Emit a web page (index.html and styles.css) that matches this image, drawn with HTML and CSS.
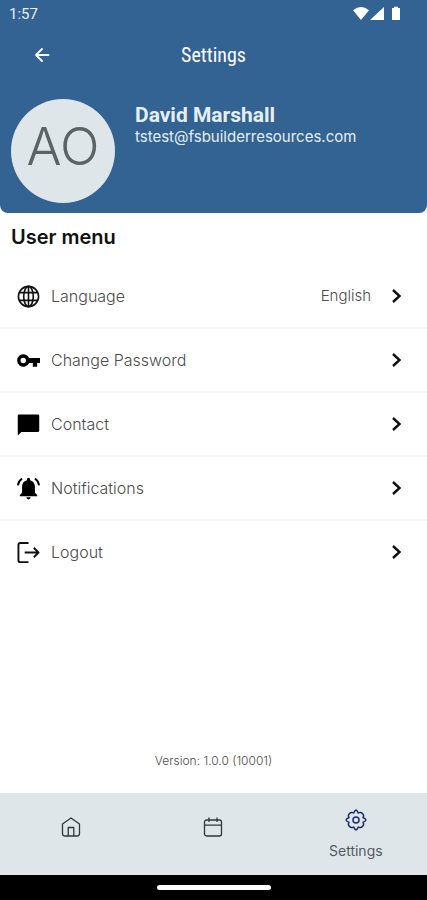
FILE: index.html
```html
<!DOCTYPE html>
<html lang="en">
<head>
<meta charset="utf-8">
<meta name="viewport" content="width=device-width, initial-scale=1">
<title>Settings</title>
<link rel="stylesheet" href="styles.css">
</head>
<body>
<div class="screen">
  <header class="header">
    <div class="status">
      <span>1:57</span>
      <svg class="status-icons" width="48" height="16" viewBox="0 0 48 16" fill="#fff" aria-hidden="true">
        <path d="M0 4.200Q8 -2.200 16 4.200L8 14z"/>
        <path d="M31 1v13H17z"/>
        <path d="M39 2h2V.8h4V2h2v12h-8z"/>
      </svg>
    </div>
    <div class="appbar">
      <button class="back" type="button" aria-label="Back">
        <svg width="16" height="16" viewBox="0 0 16 16" fill="none" stroke="#fff" stroke-width="1.8" stroke-linecap="round" stroke-linejoin="round"><path d="M14.500 8H2M8 2 2 8l6 6"/></svg>
      </button>
      <h1>Settings</h1>
    </div>
    <div class="profile">
      <div class="avatar">AO</div>
      <div class="identity">
        <h2>David Marshall</h2>
        <p>tstest@fsbuilderresources.com</p>
      </div>
    </div>
  </header>

  <main class="content">
    <h2 class="section-title">User menu</h2>
    <nav class="menu" aria-label="User menu">
      <a class="row" href="#language">
        <svg class="icon" viewBox="0 0 24 24" fill="none" stroke="#111" stroke-width="1.700"><circle cx="12" cy="12" r="10.500"/><ellipse cx="12" cy="12" rx="5" ry="10.500"/><path d="M12 1.500v21M3 8h18M3 16h18"/></svg>
        <span class="label">Language</span>
        <span class="value">English</span>
        <svg class="chevron" viewBox="0 0 12 16"><path d="m2 2 6.500 6L2 14"/></svg>
      </a>
      <a class="row" href="#password">
        <svg class="icon" viewBox="0 0 24 24"><path d="M12.650 9.500A6.500 6.500 0 1 0 12.650 14.500H16.500V18.500H21V14.500H24V9.500zM6.500 14.800a2.800 2.800 0 1 1 0-5.600 2.800 2.800 0 0 1 0 5.600z" fill-rule="evenodd"/></svg>
        <span class="label">Change Password</span>
        <svg class="chevron" viewBox="0 0 12 16"><path d="m2 2 6.500 6L2 14"/></svg>
      </a>
      <a class="row" href="#contact">
        <svg class="icon" viewBox="0 0 24 24"><path d="M2 1.500h20a1.200 1.200 0 0 1 1.200 1.200v15.800a1.200 1.200 0 0 1-1.200 1.200H4.600L.8 23.500V2.700A1.200 1.200 0 0 1 2 1.500z"/></svg>
        <span class="label">Contact</span>
        <svg class="chevron" viewBox="0 0 12 16"><path d="m2 2 6.500 6L2 14"/></svg>
      </a>
      <a class="row" href="#notifications">
        <svg class="icon" viewBox="0 0 24 24"><path d="M12 .8a1.700 1.700 0 0 1 1.700 1.700v.8C17 4.100 18.700 6.800 18.700 10v6.500l2.300 2.300V20H3v-1.200l2.300-2.300V10c0-3.200 1.700-5.900 5-6.700v-.8A1.700 1.700 0 0 1 12 .8zM9.800 21.200h4.400a2.200 2.200 0 0 1-4.400 0z"/><path d="M5.300 1.500Q1.500 4.200 1 8.800M18.700 1.500q3.800 2.700 4.300 7.300" fill="none" stroke="#000" stroke-width="2"/></svg>
        <span class="label">Notifications</span>
        <svg class="chevron" viewBox="0 0 12 16"><path d="m2 2 6.500 6L2 14"/></svg>
      </a>
      <a class="row" href="#logout">
        <svg class="icon" viewBox="0 0 24 24" fill="none" stroke="#111" stroke-width="2" stroke-linejoin="round"><path d="M12 2H3.500A2 2 0 0 0 1.500 4v16a2 2 0 0 0 2 2H12M8 12h14.500M17.500 7l5 5-5 5"/></svg>
        <span class="label">Logout</span>
        <svg class="chevron" viewBox="0 0 12 16"><path d="m2 2 6.500 6L2 14"/></svg>
      </a>
    </nav>
    <p class="version">Version: 1.0.0 (10001)</p>
  </main>

  <nav class="tabs" aria-label="Main">
    <a href="#home" aria-label="Home">
      <svg class="tab-icon" viewBox="0 0 20 20"><path d="M10 1 1.500 7v9.500A2.500 2.500 0 0 0 4 19h12a2.500 2.500 0 0 0 2.500-2.500V7zM7.200 19v-8.500h5.600V19"/></svg>
    </a>
    <a href="#calendar" aria-label="Calendar">
      <svg class="tab-icon" viewBox="0 0 20 20"><path d="M3.500 3h13a2 2 0 0 1 2 2v12a2 2 0 0 1-2 2h-13a2 2 0 0 1-2-2V5a2 2 0 0 1 2-2zM1.500 8.200h17M6 .5v4.500M14 .5v4.500"/></svg>
    </a>
    <a class="active" href="#settings" aria-current="page">
      <svg class="tab-icon gear" viewBox="0 0 22 22"><path d="M11 1 Q12.200 1.200 13.200 3.900Q15.900 2.700 17.500 4.500 19.300 6.100 18.100 8.800 20.800 9.800 21 11 20.800 12.200 18.100 13.200 19.300 15.900 17.500 17.500 15.900 19.300 13.200 18.100 12.200 20.800 11 21 9.800 20.800 8.800 18.100 6.100 19.300 4.500 17.500 2.700 15.900 3.900 13.200 1.200 12.200 1 11 1.200 9.800 3.900 8.800 2.700 6.100 4.500 4.500 6.100 2.700 8.800 3.900 9.800 1.200 11 1z"/><circle cx="11" cy="11" r="3"/></svg>
      <span>Settings</span>
    </a>
  </nav>
  <div class="system-bar"><span class="handle"></span></div>
</div>
</body>
</html>
```
FILE: styles.css
```css
* {
  box-sizing: border-box;
}

body,
h1,
h2,
p {
  margin: 0;
}

body {
  background: #fff;
  color: #4c4c4c;
  font-family: Inter, "Open Sans", sans-serif;
  font-size: 16px;
  line-height: 20px;
}

a {
  color: inherit;
  text-decoration: none;
}

.screen {
  display: flex;
  flex-direction: column;
  min-height: 100vh;
}

.header {
  padding-bottom: 10px;
  border-radius: 0 0 8px 8px;
  background: #326392;
  color: #e6eff6;
}

.status {
  display: flex;
  align-items: center;
  justify-content: space-between;
  height: 27px;
  padding: 0 26px 0 9px;
  font-family: Roboto, sans-serif;
  font-size: 15px;
}

.appbar {
  display: grid;
  grid-template-columns: 1fr auto 1fr;
  align-items: center;
  height: 56px;
}

.appbar h1 {
  color: #fff;
  font-family: "Roboto Condensed", Roboto, sans-serif;
  font-size: 20px;
  font-weight: 400;
}

.back {
  display: flex;
  justify-self: start;
  margin-left: 26px;
  padding: 8px;
  border: 0;
  background: none;
}

.profile {
  display: flex;
  gap: 20px;
  padding: 16px 11px 0;
}

.avatar {
  display: flex;
  flex: none;
  align-items: center;
  justify-content: center;
  width: 104px;
  height: 104px;
  padding-bottom: 8px;
  border-radius: 50%;
  background: #dfe6e9;
  color: #5d6264;
  font-size: 52px;
  font-weight: 300;
}

.identity {
  padding-top: 4px;
}

.identity h2 {
  font-family: Roboto, sans-serif;
  font-size: 21px;
  font-weight: 700;
  line-height: 24px;
}

.identity p {
  font-size: 15px;
  font-weight: 400;
}

.content {
  display: flex;
  flex: 1;
  flex-direction: column;
}

.section-title {
  padding: 12px 11px 0;
  color: #111;
  font-size: 20px;
  font-weight: 600;
  line-height: 24px;
}

.menu {
  padding-top: 16px;
}

.row {
  display: flex;
  align-items: center;
  height: 64px;
  padding: 0 24px 0 17px;
  border-bottom: 2px solid #f5f6f6;
  font-weight: 300;
}

.row:last-child {
  height: 62px;
  border-bottom: 0;
}

.icon {
  width: 23px;
  height: 23px;
}

.label {
  flex: 1;
  margin-left: 11px;
}

.value {
  margin-right: 20px;
  font-size: 15px;
}

.chevron {
  width: 12px;
  height: 16px;
  fill: none;
  stroke: #111;
  stroke-width: 2.4;
}

.version {
  margin-top: auto;
  padding: 16px 0 22px;
  font-size: 12px;
  font-weight: 300;
  text-align: center;
}

.tabs {
  display: grid;
  grid-template-columns: repeat(3, 1fr);
  height: 82px;
  padding-bottom: 14px;
  background: #dfe6e9;
  color: #555b60;
  font-size: 14px;
}

.tabs a {
  display: flex;
  flex-direction: column;
  align-items: center;
  justify-content: center;
  gap: 10px;
}

.tabs .active {
  justify-content: flex-end;
}

.tab-icon {
  width: 20px;
  height: 20px;
  fill: none;
  stroke: #30363a;
  stroke-width: 1.3;
  stroke-linejoin: round;
}

.gear {
  width: 22px;
  height: 22px;
  stroke: #1d2d66;
  stroke-width: 1.5;
}

.system-bar {
  display: flex;
  align-items: center;
  justify-content: center;
  height: 25px;
  background: #000;
}

.handle {
  width: 114px;
  height: 5px;
  border-radius: 3px;
  background: #fff;
}
```
